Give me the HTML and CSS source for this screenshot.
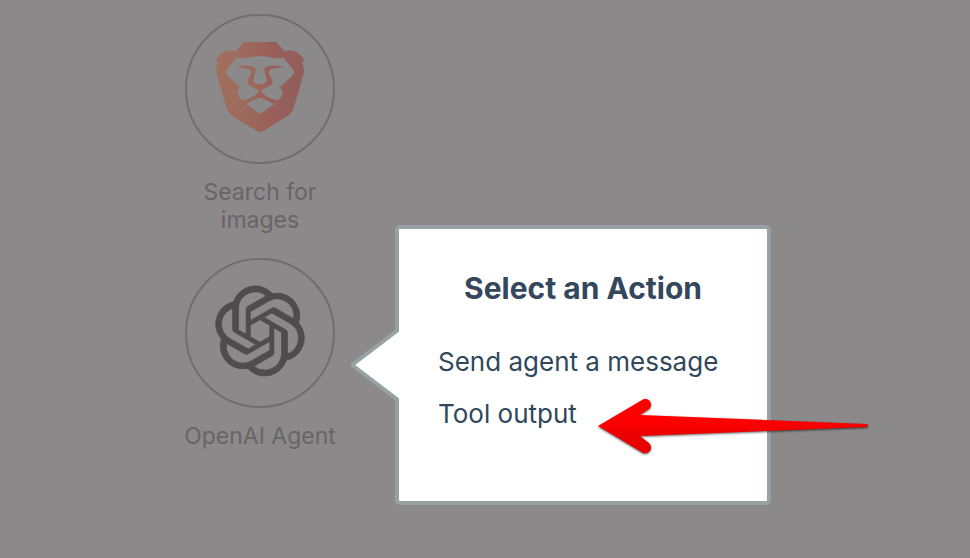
FILE: index.html
```html
<!DOCTYPE html>
<html lang="en">
<head>
<meta charset="utf-8">
<meta name="viewport" content="width=device-width, initial-scale=1">
<title>Select an Action</title>
<link rel="stylesheet" href="styles.css">
</head>
<body>
<main class="flow">
  <section class="step">
    <div class="step-icon">
      <svg class="logo" viewBox="105 101 270 271" aria-hidden="true">
        <defs>
          <linearGradient id="mane" gradientUnits="userSpaceOnUse" x1="107" y1="0" x2="373" y2="0">
            <stop offset="0" stop-color="#a1705e"/>
            <stop offset="0.4" stop-color="#9d685c"/>
            <stop offset="0.6" stop-color="#99605a"/>
            <stop offset="1" stop-color="#925d5a"/>
          </linearGradient>
        </defs>
        <path fill="url(#mane)" d="M191 101H289L313 128Q342 123 356 136L373 153L368 165L374 186C369 207 344 294 340 303C335 317 325 323 315 329L250 369Q240 375 230 369L165 329C154 323 146 317 141 303C136 290 112 207 107 186L112 165L107 153L124 136Q138 123 167 128Z"/>
        <path class="cutout" d="M169 147Q187 152 205 148Q240 138 275 148Q293 152 311 147L343 190Q342 200 336 204L302 234C301 243 308 247 308 255C306 268 298 275 289 276Q260 270 244 250H236Q220 270 191 276C182 275 174 268 173 255C173 247 179 243 177 234L144 204Q138 200 137 190Z"/>
        <path fill="url(#mane)" d="M166 176Q190 168 214 174Q226 177 227 184L219 221Q230 229 240 229Q250 229 261 221L253 184Q254 177 266 174Q290 168 314 176Q291 177 274 182Q266 184 267 196L278 217Q279 226 271 231L246 245Q243 247 244 252H236Q237 247 234 245L209 231Q201 226 202 217L213 196Q214 184 206 182Q189 177 166 176Z"/>
        <path class="cutout" d="M197 288L232 271Q240 268 248 271L283 288L246 314Q240 318 234 314Z"/>
      </svg>
    </div>
    <p class="step-label">Search for images</p>
  </section>

  <section class="step">
    <div class="step-icon">
      <svg class="logo logo-dark" viewBox="0 0 24 24" aria-hidden="true">
        <path d="M22.2819 9.8211a5.9847 5.9847 0 0 0-.5157-4.9108 6.0462 6.0462 0 0 0-6.5098-2.9A6.0651 6.0651 0 0 0 4.9807 4.1818a5.9847 5.9847 0 0 0-3.9977 2.9 6.0462 6.0462 0 0 0 .7427 7.0966 5.98 5.98 0 0 0 .511 4.9107 6.051 6.051 0 0 0 6.5146 2.9001A5.9847 5.9847 0 0 0 13.2599 24a6.0557 6.0557 0 0 0 5.7718-4.2058 5.9894 5.9894 0 0 0 3.9977-2.9001 6.0557 6.0557 0 0 0-.7475-7.0729zm-9.022 12.6081a4.4755 4.4755 0 0 1-2.8764-1.0408l.1419-.0804 4.7783-2.7582a.7948.7948 0 0 0 .3927-.6813v-6.7369l2.02 1.1686a.071.071 0 0 1 .038.052v5.5826a4.504 4.504 0 0 1-4.4945 4.4944zm-9.6607-4.1254a4.4708 4.4708 0 0 1-.5346-3.0137l.142.0852 4.783 2.7582a.7712.7712 0 0 0 .7806 0l5.8428-3.3685v2.3324a.0804.0804 0 0 1-.0332.0615L9.74 19.9502a4.4992 4.4992 0 0 1-6.1408-1.6464zM2.3408 7.8956a4.485 4.485 0 0 1 2.3655-1.9728V11.6a.7664.7664 0 0 0 .3879.6765l5.8144 3.3543-2.0201 1.1685a.0757.0757 0 0 1-.071 0l-4.8303-2.7865A4.504 4.504 0 0 1 2.3408 7.872zm16.5963 3.8558L13.1038 8.364 15.1192 7.2a.0757.0757 0 0 1 .071 0l4.8303 2.7913a4.4944 4.4944 0 0 1-.6765 8.1042v-5.6772a.79.79 0 0 0-.407-.667zm2.0107-3.0231l-.142-.0852-4.7735-2.7818a.7759.7759 0 0 0-.7854 0L9.409 9.2297V6.8974a.0662.0662 0 0 1 .0284-.0615l4.8303-2.7866a4.4992 4.4992 0 0 1 6.6802 4.66zM8.3065 12.863l-2.02-1.1638a.0804.0804 0 0 1-.038-.0567V6.0742a4.4992 4.4992 0 0 1 7.3757-3.4537l-.142.0805L8.704 5.459a.7948.7948 0 0 0-.3927.6813zm1.0976-2.3654l2.602-1.4998 2.6069 1.4998v2.9994l-2.5974 1.4997-2.6067-1.4997Z"/>
      </svg>
    </div>
    <p class="step-label">OpenAI Agent</p>

    <div class="popover" role="dialog" aria-labelledby="popover-title">
      <svg class="pointer" viewBox="0 0 50 78" aria-hidden="true">
        <path fill="#fff" d="M50 4L4 39L50 74Z"/>
        <path fill="none" stroke="#96a2a4" stroke-width="4" stroke-linejoin="bevel" d="M48 4L2 39L48 74"/>
      </svg>
      <h1 class="popover-title" id="popover-title">Select an Action</h1>
      <ul class="actions">
        <li><button class="action" type="button">Send agent a message</button></li>
        <li><button class="action" type="button">Tool output</button></li>
      </ul>
      <svg class="arrow" viewBox="0 0 276 60" aria-hidden="true">
        <defs>
          <linearGradient id="red" x1="0" y1="0" x2="0" y2="1">
            <stop offset="0.4" stop-color="#ff0000"/>
            <stop offset="0.75" stop-color="#e60000"/>
          </linearGradient>
        </defs>
        <path fill="url(#red)" d="M2 29L47 2.400C53 0 58 7 53 12L44 18L271 27Q273 29 271 30L44 39L53 46C58 51 53 58 47 56Z"/>
      </svg>
    </div>
  </section>
</main>
</body>
</html>
```
FILE: styles.css
```css
* {
  box-sizing: border-box;
}

body {
  margin: 0;
  min-height: 100vh;
  background: #8b8989;
  font-family: Inter, "Liberation Sans", sans-serif;
}

.flow {
  display: flex;
  flex-direction: column;
  align-items: flex-start;
  gap: 24px;
  padding: 14px 180px;
}

.step {
  position: relative;
  display: flex;
  flex-direction: column;
  align-items: center;
  gap: 14px;
  width: 160px;
}

.step-icon {
  display: flex;
  justify-content: center;
  width: 150px;
  height: 150px;
  padding-top: 26px;
  border: 2px solid #706f6f;
  border-radius: 50%;
}

.logo {
  width: 90px;
  height: 90px;
}

.logo-dark {
  overflow: visible;
  fill: #4e4c4d;
  stroke: #4e4c4d;
  stroke-width: 0.2;
}

.cutout {
  fill: #8b8989;
}

.step-label {
  margin: 0;
  color: #676566;
  font-size: 23px;
  line-height: 28px;
  text-align: center;
}

.popover {
  position: absolute;
  top: -33px;
  left: 215px;
  width: 376px;
  padding: 41px 0 61px;
  border: 4px solid #96a2a4;
  border-radius: 5px;
  background: #fff;
}

.pointer {
  position: absolute;
  top: 97px;
  left: -49px;
  width: 50px;
  height: 78px;
}

.popover-title {
  margin: 0 0 30px;
  color: #34475d;
  font-size: 30px;
  font-weight: 700;
  line-height: 36px;
  text-align: center;
}

.actions {
  margin: 0;
  padding: 0 0 0 39px;
  list-style: none;
}

.action {
  display: block;
  padding: 0;
  border: 0;
  background: none;
  color: #2f485b;
  font: inherit;
  font-size: 26px;
  line-height: 52px;
  white-space: nowrap;
  cursor: pointer;
}

.arrow {
  position: absolute;
  top: 168px;
  left: 197px;
  width: 276px;
  height: 60px;
  filter: drop-shadow(0 1px 1px rgba(0, 0, 0, 0.6));
  pointer-events: none;
}
```
